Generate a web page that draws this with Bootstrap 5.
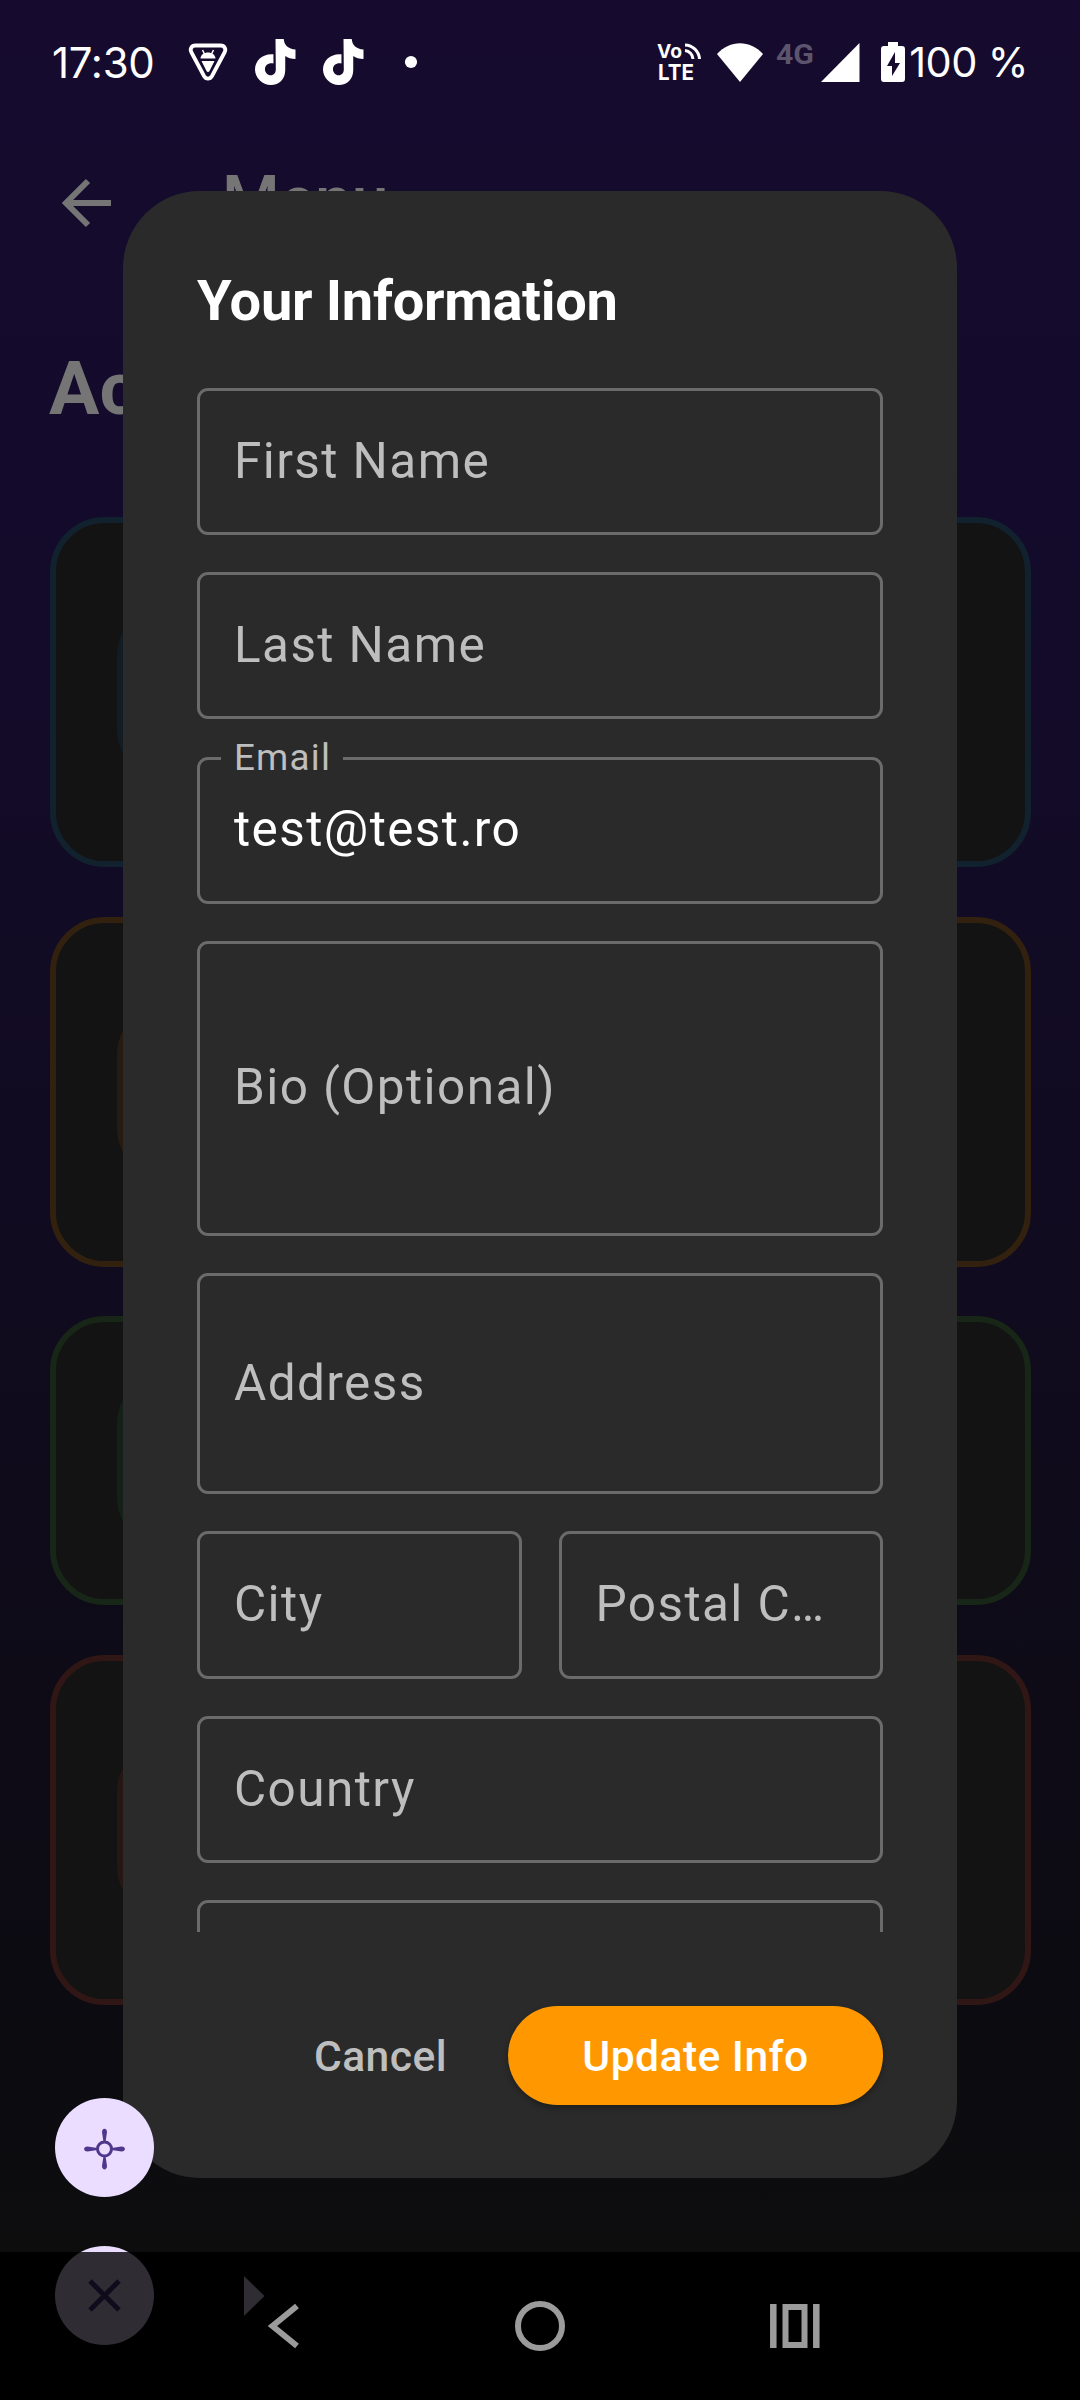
<!DOCTYPE html>
<html lang="en">
<head>
<meta charset="utf-8">
<meta name="viewport" content="width=device-width, initial-scale=1">
<title>Your Information</title>
<link href="https://cdn.jsdelivr.net/npm/bootstrap@5.3.0/dist/css/bootstrap.min.css" rel="stylesheet">
<style>
  body{background:#000;font-family:Roboto,"Liberation Sans",sans-serif;line-height:1.172}
  svg{display:block;flex:none;overflow:visible}
  .screen{width:1080px;height:2400px;background:#000}
  .app-page{height:2252px;background:linear-gradient(180deg,#160b2e 0,#140b2c 500px,#110b22 1100px,#0e0b17 1700px,#0c0b10 2060px,#0d0d0e 2252px)}
  .statusbar{height:124px;padding:0 52px 0 52px;color:#fff;font-family:Inter,"Open Sans",sans-serif;z-index:5}
  .clock{font-size:42px;letter-spacing:-.3px;width:136px;flex:none;white-space:nowrap;margin-top:1px}
  .batt-text{font-size:41.5px;letter-spacing:-.6px;margin-left:4px;white-space:pre}
  .topbar{height:158px;padding-left:62px;color:#767575}
  .topbar-title{font-size:66px;font-weight:500;margin-left:111px;line-height:77px;margin-bottom:5px}
  .page-title{font-size:75px;font-weight:700;color:#757575;padding-left:49px;line-height:88px;margin-top:62px}
  .menu-cards{gap:49.5px;padding:0 49.5px;margin-top:85px}
  .menu-card{border:6px solid;border-radius:55px;background:#131313;height:350px;padding-left:61.5px}
  .menu-tile{width:165px;height:165px;border-radius:44px}
  .c-blue{border-color:#11212d}.c-blue .menu-tile{background:#131c23}
  .c-orange{border-color:#31210e}.c-orange .menu-tile{background:#261b12}
  .c-green{border-color:#172617;height:289px}.c-green .menu-tile{background:#152018}
  .c-red{border-color:#301715}.c-red .menu-tile{background:#261715}
  .dialog-box{top:191px;left:123px;width:834px;height:1986.5px;border-radius:77px;background:#2a2a2a;padding:77px 74px 73px;z-index:2}
  .dialog-title{font-size:56px;font-weight:700;color:#fff;line-height:66px;margin-bottom:54px;letter-spacing:-.3px;white-space:nowrap}
  .fields{height:1544px;overflow:hidden;gap:37.07px}
  .field{height:147.2px;flex:none;border:3px solid #6b6b6b;border-radius:11px;padding:0 34px 2px;font-size:49.5px;letter-spacing:1.4px;color:#bebebe}
  .field-bio{height:295px}.field-address{height:221.4px}
  .half-fields{gap:37px;flex:none}
  .half-fields .field{height:147.8px;flex:1 1 0;min-width:0}
  .field-label{top:-24px;left:21px;padding:0 12px 0 13px;background:#2a2a2a;font-size:36.8px;line-height:43px;letter-spacing:1.2px}
  .btn-flat,.btn-update{font-size:42.6px;font-weight:500;line-height:1;border:0}
  .btn-flat{color:#bebebe;padding:2px 0 0;margin-right:61px;letter-spacing:.45px}
  .btn-update,.btn-update:hover{width:375px;height:99px;background:#ff9800;color:#fff;border-radius:50px;padding:2px 0 0;box-shadow:0 3px 6px rgba(0,0,0,.3);letter-spacing:.45px}
  .bubble{left:55.3px;width:99px;height:99px;border-radius:50%;background:#eaddff;z-index:3}
  .bubble-move{top:2098px}.bubble-close{top:2246px}
  .arrow-hint{left:244px;top:2276px;z-index:3}
  .navbar-sys{height:148px;background:rgba(0,0,0,.8);z-index:4}
</style>
<script src="https://cdn.jsdelivr.net/npm/bootstrap@5.3.0/dist/js/bootstrap.bundle.min.js"></script>
</head>
<body>
<div class="screen position-relative overflow-hidden">
  <div class="app-page overflow-hidden">
    <header class="statusbar d-flex align-items-center position-relative">
      <span class="clock">17:30</span>
      <svg width="40" height="38" viewBox="0 0 39 38" fill="none"><path d="M7 2.500h25c4 0 6 3.500 4 7L23.500 33c-2 3.500-6 3.500-8 0L3 9.500c-2-3.500 0-7 4-7z" stroke="#fff" stroke-width="3.800"/><path d="M16 11l-2-4M23 11l2-4" stroke="#fff" stroke-width="1.500"/><path d="M12 15.500c.5-8 14.500-8 15 0zM13 18h13l-5 10c-.8 1.500-2.200 1.500-3 0z" fill="#fff"/></svg>
      <svg style="margin-left:27px" width="41" height="46" viewBox="0 0 40 46" preserveAspectRatio="none"><path id="note" fill="#fff" d="M20 0h8c.4 3 1 5 3 7.200 2.400 2.100 5 3 8.500 3.300V20c-4 0-7.500-1-10-3v14c0 9-6 15-14 15C7 46 0 38.500 0 30.500 0 21 8 14.300 18 15.300v9.200c-4.500-1-8.300 1.500-8.300 5.700 0 3.300 2.600 6 5.600 6 3.200 0 5-2.400 5-6z"/></svg>
      <svg style="margin-left:27px" width="41" height="46" viewBox="0 0 40 46" preserveAspectRatio="none"><use href="#note"/></svg>
      <svg style="margin-left:41px" width="12" height="12" viewBox="0 0 12 12"><circle cx="6" cy="6" r="6.100" fill="#fff"/></svg>
      <svg class="ms-auto" width="45" height="42" viewBox="0 0 45 42"><g fill="#fff" font-family="Inter" font-weight="700"><text x="0" y="16.500" font-size="19" textLength="25" lengthAdjust="spacingAndGlyphs">Vo</text><text x="1" y="38.500" font-size="21.500" textLength="36" lengthAdjust="spacingAndGlyphs">LTE</text></g><path d="M28 9.500a9 9 0 0 1 8 8.500M28 4a15 15 0 0 1 14.500 14" fill="none" stroke="#fff" stroke-width="3"/></svg>
      <svg style="margin-left:15px" width="46" height="39" viewBox="0 0 46 39"><path d="M0 11C13-3.500 33-3.500 46 11L23 39z" fill="#fff"/></svg>
      <svg style="margin-left:13px" width="39" height="38" viewBox="0 0 39 38"><text x="0" y="20.500" font-size="28.500" font-family="Roboto" font-weight="700" fill="#5c546d" textLength="38" lengthAdjust="spacingAndGlyphs">4G</text></svg>
      <svg style="margin-left:6px" width="39" height="39" viewBox="0 0 39 39"><path d="M38.500 0v39H0z" fill="#fff"/></svg>
      <svg style="margin-left:21px" width="24" height="40" viewBox="0 0 24 40"><path d="M7 0h10v4h4q3 0 3 3v30q0 3-3 3H3q-3 0-3-3V7q0-3 3-3h4z" fill="#fff"/><path d="M14 10v11h5l-8 13V24H6z" fill="#160b2c"/></svg>
      <span class="batt-text">100 %</span>
    </header>
    <div class="topbar d-flex align-items-center">
      <svg width="49" height="50" viewBox="0 0 49 50" fill="none" stroke="#767575" stroke-width="6"><path d="M26 3 4 25l22 22M5 25h44"/></svg>
      <span class="topbar-title">Menu</span>
    </div>
    <h1 class="page-title mb-0">Account</h1>
    <div class="menu-cards d-flex flex-column">
      <div class="menu-card c-blue d-flex align-items-center"><div class="menu-tile"></div></div>
      <div class="menu-card c-orange d-flex align-items-center"><div class="menu-tile"></div></div>
      <div class="menu-card c-green d-flex align-items-center"><div class="menu-tile"></div></div>
      <div class="menu-card c-red d-flex align-items-center"><div class="menu-tile"></div></div>
    </div>
  </div>

  <div class="dialog-box position-absolute d-flex flex-column" role="dialog">
    <h2 class="dialog-title">Your Information</h2>
    <div class="fields d-flex flex-column">
      <div class="field d-flex align-items-center">First Name</div>
      <div class="field d-flex align-items-center">Last Name</div>
      <div class="field d-flex align-items-center position-relative text-white"><span class="field-label position-absolute" style="color:#bebebe">Email</span>test@test.ro</div>
      <div class="field field-bio d-flex align-items-center">Bio (Optional)</div>
      <div class="field field-address d-flex align-items-center">Address</div>
      <div class="half-fields d-flex">
        <div class="field d-flex align-items-center">City</div>
        <div class="field d-flex align-items-center">Postal C…</div>
      </div>
      <div class="field d-flex align-items-center">Country</div>
      <div class="field"></div>
    </div>
    <div class="d-flex justify-content-end align-items-center mt-auto">
      <button class="btn btn-flat" type="button">Cancel</button>
      <button class="btn btn-update" type="button">Update Info</button>
    </div>
  </div>

  <div class="bubble bubble-move position-absolute">
    <svg width="99" height="99" viewBox="0 0 99 99"><g transform="translate(49.500 51)"><circle r="7" fill="none" stroke="#4f378b" stroke-width="3"/><g fill="#4f378b"><path id="arm" d="M-1-7-2.500-17c0-4.500 5-4.500 5 0L1-7z"/><use href="#arm" transform="rotate(90)"/><use href="#arm" transform="rotate(180)"/><use href="#arm" transform="rotate(270)"/></g></g></svg>
  </div>
  <div class="bubble bubble-close position-absolute">
    <svg width="99" height="99" viewBox="0 0 99 99"><path d="m35 35 29 29M64 35 35 64" stroke="#4f378b" stroke-width="5"/></svg>
  </div>
  <svg class="arrow-hint position-absolute" width="21" height="40" viewBox="0 0 21 40"><path d="M0 0l20.500 20L0 40z" fill="#eaddff"/></svg>

  <nav class="navbar-sys position-relative">
    <svg width="1080" height="148" viewBox="0 0 1080 148" fill="none" stroke="#9b9b9b"><path d="M297 54 272.500 74 297 94" stroke-width="6"/><circle cx="540" cy="74" r="22" stroke-width="6"/><path d="M773.300 52v44M816.300 52v44" stroke-width="6.500"/><path d="M785.500 55h19v38h-19z" stroke-width="6"/></svg>
  </nav>
</div>
</body>
</html>
